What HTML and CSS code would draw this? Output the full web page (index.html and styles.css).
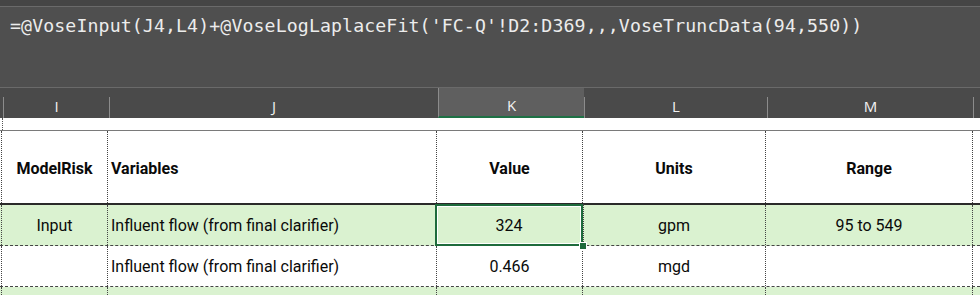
FILE: index.html
```html
<!DOCTYPE html>
<html>
<head>
<meta charset="utf-8">
<link rel="stylesheet" href="styles.css">
</head>
<body>
<div class="formula-bar">
  <div class="fb-top"></div>
  <div class="fb-text">=@VoseInput(J4,L4)+@VoseLogLaplaceFit('FC-Q'!D2:D369,,,VoseTruncData(94,550))</div>
</div>
<div class="col-headers">
  <div class="ch-pad"></div>
  <div class="ch">I</div>
  <div class="ch">J</div>
  <div class="ch sel">K</div>
  <div class="ch">L</div>
  <div class="ch last">M</div>
  <div class="ch-rest"></div>
</div>
<div class="gap-row">
  <div class="g-pad"></div>
  <div class="g"></div>
  <div class="g"></div>
  <div class="g"></div>
  <div class="g"></div>
  <div class="g"></div>
</div>
<div class="sheet">
  <div class="row head">
    <div class="pad"></div>
    <div class="c center">ModelRisk</div>
    <div class="c left">Variables</div>
    <div class="c center">Value</div>
    <div class="c center">Units</div>
    <div class="c center">Range</div>
    <div class="rest"></div>
  </div>
  <div class="row green first">
    <div class="pad"></div>
    <div class="c center">Input</div>
    <div class="c left">Influent flow (from final clarifier)</div>
    <div class="c center active">324<span class="handle"></span></div>
    <div class="c center">gpm</div>
    <div class="c center">95 to 549</div>
    <div class="rest"></div>
  </div>
  <div class="row">
    <div class="pad"></div>
    <div class="c center"></div>
    <div class="c left">Influent flow (from final clarifier)</div>
    <div class="c center">0.466</div>
    <div class="c center">mgd</div>
    <div class="c center"></div>
    <div class="rest"></div>
  </div>
  <div class="row green tail">
    <div class="pad"></div>
    <div class="c"></div>
    <div class="c"></div>
    <div class="c"></div>
    <div class="c"></div>
    <div class="c"></div>
    <div class="rest"></div>
  </div>
</div>
</body>
</html>
```
FILE: styles.css
```css
html, body {
  margin: 0;
  padding: 0;
  background: #ffffff;
  width: 980px;
  height: 295px;
  overflow: hidden;
}

.formula-bar {
  height: 88px;
  background: #4f4f4f;
  display: flex;
  flex-direction: column;
}

.fb-top {
  height: 6px;
  background: #454545;
  border-bottom: 1px solid #6a6a6a;
}

.fb-text {
  font-family: "DejaVu Sans Mono", monospace;
  font-size: 18.2px;
  letter-spacing: 0.12px;
  color: #ececec;
  padding: 7px 0 0 10px;
  line-height: 24px;
  white-space: nowrap;
  flex: 1;
  border-bottom: 1px solid #6a6a6a;
}

.col-headers {
  display: grid;
  grid-template-columns: 3px 106px 329px 146px 183px 207px 1fr;
  height: 30px;
  background: #4a4a4a;
}

.ch {
  color: #f2f2f2;
  font-family: "Open Sans", sans-serif;
  font-size: 15px;
  display: flex;
  align-items: center;
  justify-content: center;
  padding-top: 6px;
  border-left: 1px solid #8c8c8c;
  border-image: linear-gradient(to bottom, transparent 9px, #8c8c8c 9px) 1;
}

.ch.last {
  border-right: 1px solid #8c8c8c;
}

.ch.sel {
  background: #5f5f5f;
  border-bottom: 2px solid #1e7145;
  border-image: none;
  border-left: 1px solid #8c8c8c;
}

.gap-row {
  display: grid;
  grid-template-columns: 3px 106px 329px 146px 183px 207px 1fr;
  height: 12px;
  background: #fff;
}

.g-pad {
  border-right: 1px dotted #555;
}

.sheet {
  border-top: 1px solid #7a7a7a;
}

.row {
  display: grid;
  grid-template-columns: 2px 106px 329px 146px 183px 207px 1fr;
  font-family: "Roboto", sans-serif;
  font-size: 16px;
  color: #0a0a0a;
  height: 40px;
  border-bottom: 1px dashed #444;
}

.row.tail {
  height: 8px;
  border-bottom: none;
}

.row .pad {
  border-right: 1px dotted #444;
}

.row .c {
  border-right: 1px dotted #444;
  display: flex;
  align-items: center;
  white-space: nowrap;
  position: relative;
}

.row .center { justify-content: center; }
.row .left { justify-content: flex-start; padding-left: 3px; }

.row.head {
  height: 72px;
  font-weight: bold;
  border-bottom: 2px solid #2a2a2a;
}

.row.head .c { padding-top: 3px; }

.row.green {
  background: #daf2d0;
}

.row .active {
  box-shadow: inset 0 0 0 2px #1e6b3c, inset 0 0 0 3px #ffffff;
  margin: -1px -1px -1px -2px;
}

.handle {
  position: absolute;
  right: -4px;
  bottom: -4px;
  width: 6px;
  height: 6px;
  background: #1e6b3c;
  border: 1px solid #fff;
  z-index: 2;
}
```
